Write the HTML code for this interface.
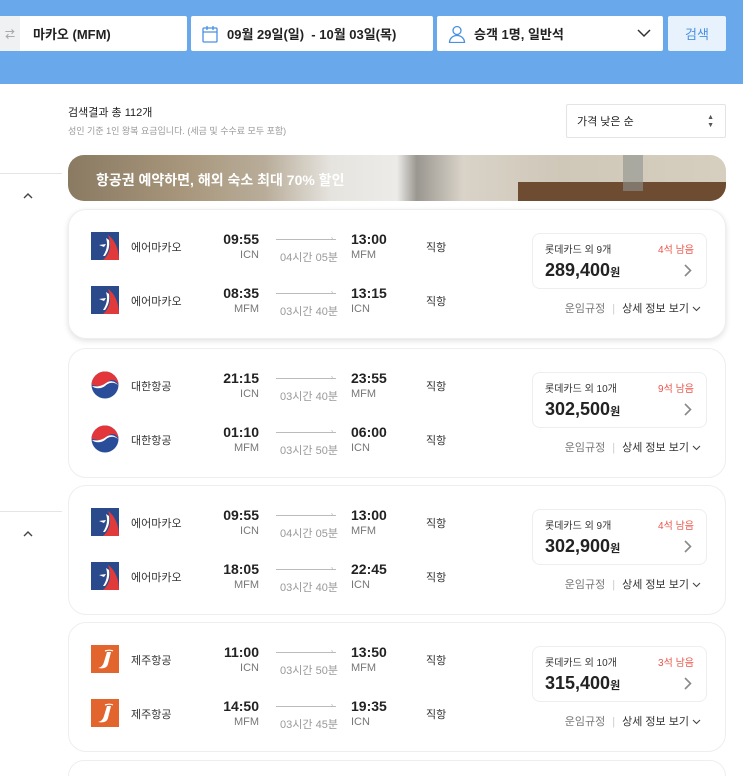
<!DOCTYPE html>
<html><head><meta charset="utf-8"><style>
*{margin:0;padding:0;box-sizing:border-box}
html,body{width:743px;height:776px;overflow:hidden}
body{background:#fff;font-family:"Liberation Sans","Noto Sans CJK KR",sans-serif;color:#222;position:relative}
.hdr{position:absolute;left:0;top:0;width:743px;height:84px;background:#69a8ea}
.box{position:absolute;top:16px;height:35px;background:#fff;border-radius:2px;font-size:13px;font-weight:bold;display:flex;align-items:center}
.a{position:absolute}
.card{position:absolute;left:68px;width:658px;height:130px;border:1px solid #eceef1;border-radius:18px;background:#fff}
.card.sh{box-shadow:0 2px 6px rgba(0,0,0,.12)}
.logo{position:absolute;left:22px;width:28px;height:28px}
.al{position:absolute;left:62px;font-size:11px;color:#333}
.t{position:absolute;font-size:14px;font-weight:bold;color:#222}
.c{position:absolute;font-size:11px;color:#777}
.ln{position:absolute;left:207px;width:60px;height:1px;background:#bbb}
.d{position:absolute;left:202px;width:76px;text-align:center;font-size:11px;color:#999}
.dir{position:absolute;left:357px;font-size:11px;color:#333}
.pb{position:absolute;left:463px;top:23px;width:175px;height:56px;border:1px solid #eceef1;border-radius:8px}
.ft{position:absolute;right:24px;top:90px;font-size:11px;color:#333}
</style></head><body>
<div class="hdr"></div>
<div class="box" style="left:0;width:187px"><div style="width:20px;height:35px;background:#f0f1f3;color:#aaa;font-size:10px;display:flex;align-items:center;justify-content:center">⇄</div><span style="margin-left:13px">마카오 (MFM)</span></div>
<div class="box" style="left:191px;width:242px"><svg width="16" height="18" style="margin-left:11px" viewBox="0 0 16 18" fill="none" stroke="#4a90e2" stroke-width="1.3"><rect x="1" y="3" width="14" height="14" rx="1"/><path d="M1 7h14M5 1v4M11 1v4"/></svg><span style="margin-left:9px">09월 29일(일) &nbsp;- 10월 03일(목)</span></div>
<div class="box" style="left:437px;width:226px"><svg width="18" height="18" style="margin-left:11px" viewBox="0 0 18 18" fill="none" stroke="#4a90e2" stroke-width="1.3"><circle cx="9" cy="5.5" r="4"/><path d="M1.5 17.5c0-4 3.3-7 7.5-7s7.5 3 7.5 7z"/></svg><span style="margin-left:8px">승객 1명, 일반석</span><svg class="a" style="right:12px;top:12px" width="14" height="10" viewBox="0 0 14 10" fill="none" stroke="#333" stroke-width="1.5"><path d="M1 2l6 6 6-6"/></svg></div>
<div class="box" style="left:668px;width:58px;background:#e8f2fd;color:#4a90e2;justify-content:center;font-weight:normal">검색</div>

<div class="a" style="left:0;top:173px;width:62px;height:1px;background:#e5e5e5"></div>
<svg class="a" style="left:23px;top:192px" width="10" height="7" viewBox="0 0 10 7" fill="none" stroke="#444" stroke-width="1.4"><path d="M1 6l4-4 4 4"/></svg>
<div class="a" style="left:0;top:511px;width:62px;height:1px;background:#e5e5e5"></div>
<svg class="a" style="left:23px;top:530px" width="10" height="7" viewBox="0 0 10 7" fill="none" stroke="#444" stroke-width="1.4"><path d="M1 6l4-4 4 4"/></svg>

<div class="a" style="left:68px;top:104px;font-size:11px;color:#222">검색결과 총 112개</div>
<div class="a" style="left:68px;top:124px;font-size:9px;color:#999">성인 기준 1인 왕복 요금입니다. (세금 및 수수료 모두 포함)</div>
<div class="a" style="left:566px;top:104px;width:160px;height:34px;border:1px solid #e3e3e3;border-radius:2px;font-size:11px;padding:8px 10px">가격 낮은 순<span class="a" style="right:11px;top:9px;font-size:7px;line-height:8px;color:#555">▲<br>▼</span></div>

<div class="a" style="left:68px;top:155px;width:658px;height:46px;border-radius:16px;overflow:hidden;background:linear-gradient(90deg,#8a7a62 0%,#a8977c 18%,#b9ad9a 30%,#e6e4df 40%,#ecebe8 50%,#9a9690 53%,#d9d3c8 60%,#cfc7b8 75%,#d6cebe 100%)">
<div class="a" style="left:450px;top:27px;width:208px;height:19px;background:#6d4c32"></div>
<div class="a" style="left:555px;top:0;width:20px;height:36px;background:#8e9290;opacity:.6"></div>
<div class="a" style="left:28px;top:15px;font-size:14px;font-weight:bold;color:#fff">항공권 예약하면, 해외 숙소 최대 70% 할인</div></div>

<div id="cards"></div>
<script>
const AM='<svg class="logo" style="top:TOPpx" viewBox="0 0 28 28"><rect width="28" height="28" fill="#2b4a8c"/><path d="M12 28C19 22 21 13 17 3c6 4 11 13 11 25z" fill="#e03a3a"/><path d="M12 24c4-6 5-12 3-18l3 2c1 7-1 12-4 16z" fill="#fff"/><path d="M8 13l7-1-2 3z" fill="#fff"/></svg>';
const KE='<svg class="logo" style="top:TOPpx" viewBox="0 0 28 28"><circle cx="14" cy="14" r="13.5" fill="#2a4d9a"/><path d="M0.5 14A13.5 13.5 0 0 1 27.5 14C26 9 21 8 18 10 15 12 13 15 9 15 5 15 3 14 0.5 14z" fill="#e2363b"/><path d="M1 15c3 3 9 3 13 0 3-3 8-5 13-1-3-4-8-5-12-2-4 3-8 4-14 3z" fill="#fff"/></svg>';
const JJ='<svg class="logo" style="top:TOPpx" viewBox="0 0 28 28"><rect width="28" height="28" fill="#e2652e"/><path d="M16 7h4l-3 12c-1 4-5 5-10 4 4-1 5-3 6-6z" fill="#fff"/><path d="M14 6c3-1 6-1 8 0" stroke="#fff" stroke-width="1.2" fill="none"/></svg>';
const data=[
[209,AM,'에어마카오',['09:55','ICN','04시간 05분','13:00','MFM'],['08:35','MFM','03시간 40분','13:15','ICN'],'9개','4석 남음','289,400',1],
[348,KE,'대한항공',['21:15','ICN','03시간 40분','23:55','MFM'],['01:10','MFM','03시간 50분','06:00','ICN'],'10개','9석 남음','302,500',0],
[485,AM,'에어마카오',['09:55','ICN','04시간 05분','13:00','MFM'],['18:05','MFM','03시간 40분','22:45','ICN'],'9개','4석 남음','302,900',0],
[622,JJ,'제주항공',['11:00','ICN','03시간 50분','13:50','MFM'],['14:50','MFM','03시간 45분','19:35','ICN'],'10개','3석 남음','315,400',0]];
let h='';
function row(r,y,logo,name){return logo.replace('TOP',y-8)+
`<div class="al" style="top:${y-1}px">${name}</div>
<div class="t" style="right:466px;top:${y-9}px">${r[0]}</div>
<div class="c" style="right:466px;top:${y+9}px">${r[1]}</div>
<div class="ln" style="top:${y-1}px"></div><div class="a" style="left:262px;top:${y-4}px;font-size:6px;color:#aaa">›</div>
<div class="d" style="top:${y+9}px">${r[2]}</div>
<div class="t" style="left:282px;top:${y-9}px">${r[3]}</div>
<div class="c" style="left:282px;top:${y+9}px">${r[4]}</div>
<div class="dir" style="top:${y-1}px">직항</div>`}
for(const c of data){
h+=`<div class="card${c[8]?' sh':''}" style="top:${c[0]}px">`+row(c[3],30,c[1],c[2])+row(c[4],84,c[1],c[2])+
`<div class="pb"><div class="a" style="left:12px;top:7px;font-size:10px;color:#333">롯데카드 외 ${c[5]}</div>
<div class="a" style="right:12px;top:7px;font-size:10px;color:#e8564a">${c[6]}</div>
<div class="a" style="left:12px;top:26px;font-size:18px;font-weight:bold;color:#222">${c[7]}<span style="font-size:11px">원</span></div>
<svg class="a" style="right:14px;top:30px" width="8" height="13" viewBox="0 0 8 13" fill="none" stroke="#888" stroke-width="1.6"><path d="M1 1l5.5 5.5L1 12"/></svg></div>
<div class="ft"><span style="color:#777">운임규정</span><span style="color:#ccc;margin:0 7px">|</span>상세 정보 보기 <svg width="9" height="6" viewBox="0 0 9 6" fill="none" stroke="#444" stroke-width="1.1"><path d="M1 1l3.5 3.5L8 1"/></svg></div></div>`}
h+='<div class="card" style="top:760px;height:16px;border-bottom:none;border-radius:18px 18px 0 0"></div>';
document.getElementById('cards').innerHTML=h;
</script>
</body></html>
